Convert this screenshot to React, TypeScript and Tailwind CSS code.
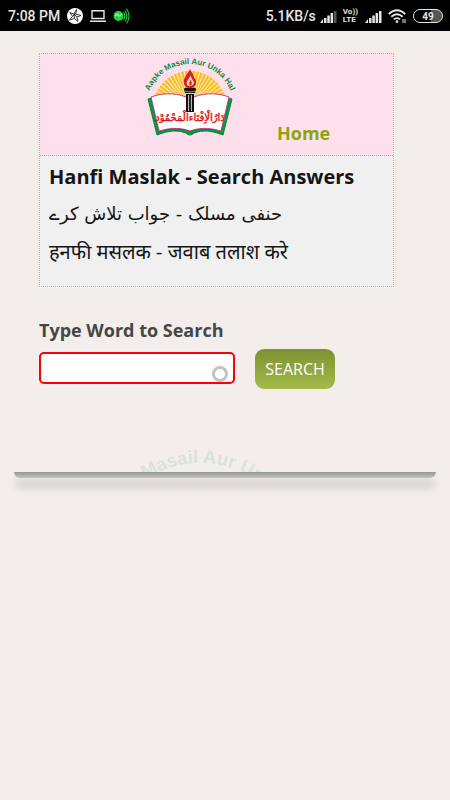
import React from 'react';

const RAYS = Array.from({ length: 31 }, (_, i) => i);

interface LogoArtProps {
  id: string;
  className?: string;
  label?: string;
  calligraphy?: boolean;
}

const LogoArt = ({ id, className, label, calligraphy }: LogoArtProps) => (
  <svg viewBox="0 0 120 90" className={className} role="img" aria-label={label}>
    <defs>
      <path id={id} d="M16 61 L16 57 A44 44 0 0 1 104 57 L104 61" />
    </defs>

    {/* Sun rays */}
    <g fill="#f9c20e">
      {RAYS.map((i) => {
        const a = Math.PI * (i / 30);
        const w = 0.036;
        const x = (r: number, t: number) => 60 - r * Math.cos(t);
        const y = (r: number, t: number) => 57 - r * Math.sin(t);
        return (
          <polygon
            key={i}
            points={`${x(6, a)},${y(6, a)} ${x(37, a - w)},${y(37, a - w)} ${x(37, a + w)},${y(37, a + w)}`}
          />
        );
      })}
    </g>

    {/* Book */}
    <path
      d="M22 47 L18 48 L27 84 Q44 77 56 82 Q60 86 64 82 Q76 77 93 84 L102 48 L98 47 L91 81 Q76 75 61 80 L59 80 Q44 75 29 81 Z"
      fill="#0a9a45"
      stroke="#07823a"
      strokeWidth="1"
    />
    <path
      d="M21 46 C34 41 50 42 60 48 C70 42 86 41 99 46 L91 80 C78 76 68 77 60 80 C52 77 42 76 29 80 Z"
      fill="#fff"
      stroke="#c2277b"
      strokeWidth="0.9"
    />

    {/* Torch */}
    <path d="M54 38 H66 L65 42 H55 Z M56 43 H64 V61 H56 Z" fill="#111" />
    <path d="M58.6 44 V60 M61.4 44 V60" stroke="#fff" strokeWidth="0.8" />
    <ellipse cx="60" cy="38" rx="6" ry="1.8" fill="#111" />
    <path d="M54.5 40 Q60 42 65.5 40" fill="none" stroke="#f9c20e" strokeWidth="0.7" />
    <path d="M60 18 C58 23 52.5 27 54 33 C55 36 58 37 60 37 C63 37 66.5 35 66 30 C65.8 27 64 28 63.5 25 C63 22 61 21 60 18 Z" fill="#e21b1b" />
    <path d="M60.5 24 C59.5 28 55.5 30 57 33.5 C58 36 63 35.5 64 32 C64.3 30 61.5 29 60.5 24 Z" fill="#fcd9c8" />
    <path d="M60.5 28.5 C60 31 58.5 32 59.8 34.4 C62 34.5 62.5 32 60.5 28.5 Z" fill="#e21b1b" />

    {calligraphy && (
      <text
        x="60"
        y="70"
        direction="rtl"
        textAnchor="middle"
        className="font-['DejaVu_Sans',sans-serif]"
        fontSize="10"
        fill="#dc1414"
        stroke="#dc1414"
        strokeWidth="0.4"
      >
        دَارُالْاِفْتَاءالْمَحْمُوْد
      </text>
    )}
    <text className="font-['Liberation_Sans',sans-serif]" fontSize="8" fontWeight="700" fill="#0a8a3c">
      <textPath href={`#${id}`} startOffset="50%" textAnchor="middle">
        Aapke Masail Aur Unka Hal
      </textPath>
    </text>
  </svg>
);

const Signal = ({ dim }: { dim?: boolean }) => (
  <svg viewBox="0 0 17 13" className="h-[13px] w-[17px]" fill="#e6e6e6" aria-hidden="true">
    <path d="M0 13 L3 9 V13 Z M4 8 H6.5 V13 H4 Z M7.3 5.5 H9.8 V13 H7.3 Z M10.6 3 H13.1 V13 H10.6 Z" />
    <path d="M14 1 H16.5 V13 H14 Z" fill={dim ? '#555' : '#e6e6e6'} />
  </svg>
);

const StatusBar = () => (
  <header className="flex h-[31px] items-center justify-between bg-black pt-px pl-2 pr-[7px] font-[Roboto,sans-serif] text-[14px] font-medium text-[#e6e6e6]">
    <div className="flex items-center gap-[7px]">
      <span>7:08 PM</span>
      <svg viewBox="0 0 16 16" className="h-4 w-4" aria-hidden="true">
        <circle cx="8" cy="8" r="8" fill="#fff" />
        <path
          d="M9.5 1.5 L8.7 6 L14 7.5 L9.8 9 L11 13.5 L7.5 10.4 L2.5 12 L5.5 8.3 L2.8 4.5 L7 6 Z M7 6 L9.8 9 M8.7 6 L5.5 8.3 M7 6 L7.5 10.4"
          fill="none"
          stroke="#222"
          strokeWidth="0.9"
        />
      </svg>
      <svg viewBox="0 0 16 12" className="h-3 w-4" fill="none" stroke="#e6e6e6" strokeWidth="1.4" aria-hidden="true">
        <path d="M2 .7 H14 V8.5 H2 Z M0 11.3 H16" />
      </svg>
      <svg viewBox="0 0 17 16" className="h-4 w-[17px]" fill="none" aria-hidden="true">
        <circle cx="5.5" cy="8" r="5" fill="#22d43c" />
        <path d="M2.5 8 Q4 4.5 5 7 T8.5 6" stroke="#b8f5c0" strokeWidth="1.2" />
        <path d="M10.5 4 Q13 8 10.5 12 M12 2.5 Q15.5 8 12 13.5 M13.5 .5 Q18.5 8 13.5 15.5" stroke="#22c43c" strokeWidth="1.1" />
      </svg>
    </div>
    <div className="flex items-center">
      <span className="mr-1">5.1KB/s</span>
      <Signal dim />
      <span className="ml-[6px] mr-[7px] flex flex-col text-[8px] leading-[8px] font-bold">
        <span className="h-2 overflow-hidden">Vo))</span>
        <span className="h-2 overflow-hidden">LTE</span>
      </span>
      <Signal />
      <svg viewBox="0 0 19 15" className="ml-[6px] h-[15px] w-[19px]" fill="none" stroke="#e6e6e6" strokeWidth="1.8" aria-hidden="true">
        <path d="M.8 5 Q9 -2.5 17.2 5 M3.3 7.8 Q9 2.8 14.7 7.8 M5.8 10.4 Q9 7.8 12.2 10.4" />
        <circle cx="9" cy="12.6" r="1.3" fill="#e6e6e6" stroke="none" />
        <path d="M15 10 V14 M17 10 V14" strokeWidth="1" />
      </svg>
      <span className="ml-[6px] flex h-[14px] w-[30px] items-center justify-center rounded-full border border-[#e6e6e6] bg-linear-to-r from-black from-60% to-[#555] to-60% text-[10px] font-bold">
        49
      </span>
    </div>
  </header>
);

const App: React.FC = () => {
  return (
    <div className="min-h-screen bg-[#f3eeeb] font-['Open_Sans','Noto_Sans',sans-serif]">
      <StatusBar />

      <div className="mx-[14px]">
        <main className="pt-[22px] pr-[42px] pl-[25px]">
          <section className="border border-dotted border-[#bcb4b8] bg-[#f0f0f0]">
            <div className="flex h-[102px] items-end border-b border-dotted border-[#bcb4b8] bg-[#fde0eb]">
              <LogoArt id="logo-arc" className="ml-[90px] mb-[14px] h-[90px] w-[120px]" label="Aapke Masail Aur Unka Hal" calligraphy />
              <a href="#home" className="mb-[9px] ml-[27px] text-[18px] leading-[26px] font-bold text-[#8aa60c]">
                Home
              </a>
            </div>
            <div className="px-[9px] pt-1 pb-4 text-[20px] text-[#151515]">
              <h1 className="leading-[34px] font-bold">Hanfi Maslak - Search Answers</h1>
              <p lang="ur" className="font-['DejaVu_Sans',sans-serif] text-[18px] leading-[40px]">
                <bdi dir="rtl">حنفی مسلک - جواب تلاش کرے</bdi>
              </p>
              <p lang="hi" className="leading-[36px]">हनफी मसलक - जवाब तलाश करे</p>
            </div>
          </section>

          <form className="pt-[29px] pb-11" onSubmit={(e) => e.preventDefault()}>
            <label htmlFor="word" className="block text-[18px] leading-[28px] font-bold text-[#454745]">
              Type Word to Search
            </label>
            <div className="mt-[5px] flex items-start gap-5">
              <div className="relative mt-[3px]">
                <input
                  id="word"
                  type="text"
                  className="block h-8 w-[196px] rounded-[5px] border-2 border-[#fb0007] bg-white pl-2 pr-7 text-[16px]"
                />
                <span className="absolute right-[7px] bottom-[2px] h-4 w-4 rounded-full border-[3px] border-[#c2c2c2]" />
              </div>
              <button type="submit" className="h-10 w-20 rounded-[9px] bg-linear-to-b from-[#7d9133] to-[#a5bb48] text-[16px] text-white">
                SEARCH
              </button>
            </div>
          </form>
        </main>

        <div className="h-[39px] overflow-hidden" aria-hidden="true">
          <LogoArt id="footer-arc" className="ml-12 h-[207px] w-[276px] opacity-10" />
        </div>
        <div className="h-[6px] rounded-b-[6px] bg-linear-to-b from-[#969896] to-[#c4c3c0] shadow-[0_9px_9px_-1px_rgba(0,0,0,0.25)]" />
      </div>
    </div>
  );
};

export default App;
